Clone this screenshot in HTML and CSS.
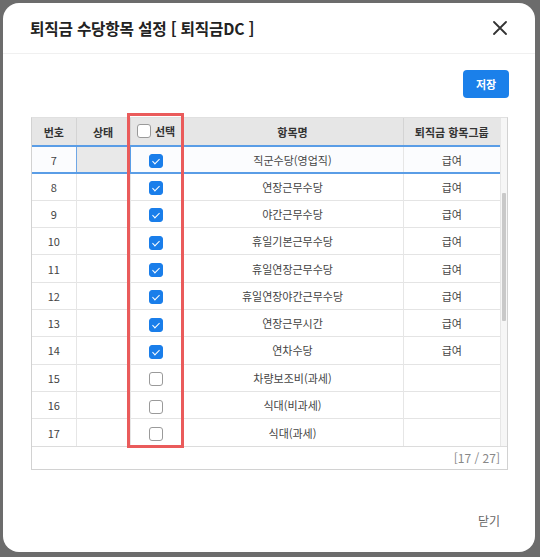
FILE: index.html
```html
<!DOCTYPE html>
<html lang="ko">
<head>
<meta charset="utf-8">
<link rel="stylesheet" href="styles.css">
</head>
<body>
<div class="modal">
  <div class="modal-header">
    <h1 class="title">퇴직금 수당항목 설정 [ 퇴직금DC ]</h1>
    <button class="close" aria-label="닫기">
      <svg width="14" height="14" viewBox="0 0 14 14"><path d="M1 1 L13 13 M13 1 L1 13" stroke="#333" stroke-width="1.8" fill="none" stroke-linecap="round"/></svg>
    </button>
  </div>
  <div class="modal-body">
    <div class="toolbar"><button class="btn-save">저장</button></div>
    <div class="grid-box">
      <div class="grid-scroll">
        <table class="grid">
          <colgroup>
            <col class="c-no"><col class="c-st"><col class="c-sel"><col class="c-name"><col class="c-grp">
          </colgroup>
          <thead>
            <tr><th>번호</th><th>상태</th><th><span class="hsel"><span class="cb"></span>선택</span></th><th>항목명</th><th>퇴직금 항목그룹</th></tr>
          </thead>
          <tbody>
            <tr class="active"><td>7</td><td class="focus"></td><td><span class="cb on"></span></td><td>직군수당(영업직)</td><td>급여</td></tr>
            <tr><td>8</td><td></td><td><span class="cb on"></span></td><td>연장근무수당</td><td>급여</td></tr>
            <tr><td>9</td><td></td><td><span class="cb on"></span></td><td>야간근무수당</td><td>급여</td></tr>
            <tr><td>10</td><td></td><td><span class="cb on"></span></td><td>휴일기본근무수당</td><td>급여</td></tr>
            <tr><td>11</td><td></td><td><span class="cb on"></span></td><td>휴일연장근무수당</td><td>급여</td></tr>
            <tr><td>12</td><td></td><td><span class="cb on"></span></td><td>휴일연장야간근무수당</td><td>급여</td></tr>
            <tr><td>13</td><td></td><td><span class="cb on"></span></td><td>연장근무시간</td><td>급여</td></tr>
            <tr><td>14</td><td></td><td><span class="cb on"></span></td><td>연차수당</td><td>급여</td></tr>
            <tr><td>15</td><td></td><td><span class="cb"></span></td><td>차량보조비(과세)</td><td></td></tr>
            <tr><td>16</td><td></td><td><span class="cb"></span></td><td>식대(비과세)</td><td></td></tr>
            <tr><td>17</td><td></td><td><span class="cb"></span></td><td>식대(과세)</td><td></td></tr>
          </tbody>
        </table>
        <div class="vscroll"><div class="thumb"></div></div>
      </div>
      <div class="grid-foot">[17 / 27]</div>
      <div class="highlight"></div>
    </div>
  </div>
  <div class="modal-footer"><button class="btn-close">닫기</button></div>
</div>
</body>
</html>
```

FILE: styles.css
```css
* { box-sizing: border-box; }
html, body { margin: 0; padding: 0; }
body {
  width: 540px;
  height: 557px;
  background: #6c6c6c;
  font-family: "Noto Sans CJK KR", "Noto Sans", sans-serif;
  padding: 3px 0 0 3px;
  overflow: hidden;
}
.modal {
  width: 532px;
  height: 549px;
  background: #fff;
  border-radius: 16px;
  display: flex;
  flex-direction: column;
}
.modal-header {
  height: 51px;
  flex: none;
  display: flex;
  align-items: center;
  justify-content: space-between;
  padding: 0 28px 0 27px;
  border-bottom: 1px solid #f0f0f0;
}
.title {
  margin: 0;
  font-size: 15.7px;
  font-weight: 700;
  color: #222;
  letter-spacing: -0.2px;
}
.close {
  border: 0;
  background: none;
  padding: 0;
  width: 14px;
  height: 14px;
  display: flex;
}
.modal-body {
  flex: 1;
  padding: 16px 27px 0 28px;
  display: flex;
  flex-direction: column;
}
.toolbar {
  display: flex;
  justify-content: flex-end;
  margin-right: -1px;
}
.btn-save {
  width: 46px;
  height: 28px;
  border: 0;
  border-radius: 4px;
  background: #1b80ea;
  color: #fff;
  font-family: inherit;
  font-size: 11px;
  font-weight: 700;
  padding: 0;
}
.grid-box {
  margin-top: 19px;
  position: relative;
  border: 1px solid #d2d2d2;
  border-top-color: #e0e0e0;
}
.grid-scroll {
  display: flex;
}
.grid {
  border-collapse: collapse;
  table-layout: fixed;
  width: 468px;
  font-size: 11px;
  color: #444;
}
.c-no { width: 44px; }
.c-st { width: 54px; }
.c-sel { width: 52px; }
.c-name { width: 221px; }
.c-grp { width: 97px; }
.grid th {
  height: 28px;
  background: #e6e6e6;
  color: #333;
  font-weight: 700;
  text-align: center;
  border-left: 1px solid #d4d4d4;
  padding: 0;
}
.grid th:first-child { border-left: 0; }
.grid td {
  height: 27.3px;
  text-align: center;
  padding: 0;
  border-top: 1px solid #e4e4e4;
  border-left: 1px solid #e6e6e6;
}
.grid td:first-child { border-left: 0; }
.grid tr.active td {
  height: 27px;
  border-top: 2px solid #5a9de6;
  border-bottom: 2px solid #5a9de6;
  background: #fbfcfe;
}
.grid tr.active td.focus {
  background: #e9e9e9;
  border: 2px solid #5a9de6;
  border-left: 1px solid #6fa7e6;
}
.hsel {
  display: inline-flex;
  align-items: center;
  gap: 4px;
}
.cb {
  display: inline-block;
  width: 14px;
  height: 14px;
  border: 1px solid #9a9a9a;
  border-radius: 3px;
  background: #fff;
  vertical-align: middle;
  position: relative;
}
.cb.on {
  background: #1a7eea;
  border-color: #1a7eea;
}
.cb.on::after {
  content: "";
  position: absolute;
  left: 4px;
  top: 2px;
  width: 3px;
  height: 6px;
  border: solid #fff;
  border-width: 0 1.5px 1.5px 0;
  transform: rotate(45deg);
}
.vscroll {
  width: 8px;
  background: #f6f6f6;
  border-left: 1px solid #e6e6e6;
  padding: 75px 1px 0 1px;
}
.thumb {
  height: 128px;
  background: #c9c9c9;
  border-radius: 1px;
}
.grid-foot {
  height: 23px;
  border-top: 1px solid #dcdcdc;
  text-align: right;
  padding: 2px 7px 0 0;
  font-size: 12px;
  color: #888;
}
.highlight {
  position: absolute;
  left: 95px;
  top: -5px;
  width: 57px;
  height: 335px;
  border: 3px solid #ea5b5b;
  pointer-events: none;
}
.modal-footer {
  height: 82px;
  flex: none;
  display: flex;
  justify-content: flex-end;
  align-items: flex-start;
  padding: 42px 35px 0 0;
}
.btn-close {
  border: 0;
  background: none;
  padding: 0;
  font-family: inherit;
  font-size: 12px;
  color: #666;
}
```
